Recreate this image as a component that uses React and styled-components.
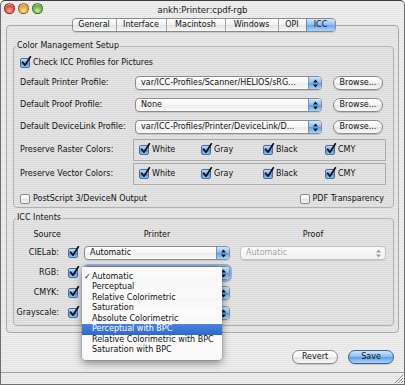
import React from 'react';
import styled, { createGlobalStyle, css } from 'styled-components';

const Global = createGlobalStyle`
  html, body { margin: 0; padding: 0; background: #fff; }
  body { font-family: "DejaVu Sans", Verdana, sans-serif; }
  * { box-sizing: border-box; }
`;

const pinstripe = css`
  background: repeating-linear-gradient(to bottom, #eeeeee 0px, #eeeeee 1px, #e5e5e5 1px, #e5e5e5 2px);
`;

const Window = styled.div`
  width: 405px;
  height: 385px;
  border: 1px solid #6e6e6e;
  border-top-color: #3a3a3a;
  border-radius: 5px 5px 0 0;
  ${pinstripe}
  display: flex;
  flex-direction: column;
  font-size: 8px;
  line-height: 10px;
  color: #111;
  overflow: hidden;
`;

const TitleBar = styled.div`
  height: 15px;
  display: grid;
  grid-template-columns: 1fr auto 1fr;
  align-items: center;
  padding: 0 3px;
`;

const Lights = styled.div`
  display: flex;
  gap: 3px;
`;

const lightColors = {
  red: ['#ffb1a6', '#e0463a', '#9c1b10'],
  yellow: ['#ffe7a0', '#e9a42a', '#a96a07'],
  green: ['#c9f0a6', '#6cb33d', '#2f7414'],
};

const Light = styled.span`
  width: 11px;
  height: 11px;
  border-radius: 50%;
  border: 1px solid rgba(0, 0, 0, 0.35);
  background: ${({ $c }) =>
    `radial-gradient(circle at 50% 75%, ${lightColors[$c][0]} 0%, ${lightColors[$c][1]} 55%, ${lightColors[$c][2]} 100%)`};
  box-shadow: inset 0 1px 1px rgba(255, 255, 255, 0.6);
`;

const Title = styled.div`
  font-size: 8.5px;
  color: #1a1a1a;
  padding-top: 2px;
`;

const TabRow = styled.div`
  display: flex;
  justify-content: center;
  margin-top: 2px;
  padding-left: 2px;
  position: relative;
  z-index: 1;
`;

const Tabs = styled.div`
  display: flex;
  height: 14px;
  border: 1px solid #8a8a8a;
  border-radius: 4px;
  overflow: hidden;
  box-shadow: 0 1px 1px rgba(0, 0, 0, 0.12);
`;

const Tab = styled.div`
  width: ${({ $w }) => $w}px;
  display: flex;
  align-items: center;
  justify-content: center;
  border-left: 1px solid #a4a4a4;
  background: linear-gradient(#ffffff, #f1f1f1 48%, #e3e3e3 52%, #f7f7f7);
  &:first-child { border-left: none; }
  ${({ $active }) =>
    $active &&
    css`
      background: linear-gradient(#cfe6fd, #8fc0f1 48%, #68a7ea 52%, #a9d5fb);
      border-left-color: #5a86bf;
    `}
`;

const Panel = styled.div`
  margin: -7px 5px 0 5px;
  height: 308px;
  border: 1px solid #a9a9a9;
  border-radius: 4px;
  background: rgba(0, 0, 0, 0.025);
  padding: 15px 4px 5px 6px;
  display: flex;
  flex-direction: column;
`;

const Group = styled.fieldset`
  margin: ${({ $mt }) => $mt || 0}px 0 0 0;
  padding: 5px 0 ${({ $pb }) => $pb || 1}px 0;
  border: 1px solid #b1b1b1;
  border-radius: 4px;
  background: rgba(0, 0, 0, 0.015);
  min-width: 0;
`;

const Legend = styled.legend`
  margin-left: 2px;
  padding: 0 1px;
  font-size: 8px;
  line-height: 10px;
  color: #151515;
`;

const Stack = styled.div`
  display: flex;
  flex-direction: column;
`;

const CheckRow = styled.div`
  margin-top: ${({ $mt }) => $mt || 0}px;
  height: 14px;
  display: flex;
  align-items: center;
  justify-content: space-between;
  padding: 0 9px 0 6px;
`;

const CheckItem = styled.label`
  display: flex;
  align-items: center;
  gap: 3px;
  white-space: nowrap;
`;

const Box = styled.span`
  width: 10px;
  height: 10px;
  flex: none;
  position: relative;
  border-radius: 2px;
  border: 1px solid ${({ $on }) => ($on ? '#4a6a98' : '#8a8a8a')};
  background: ${({ $on }) =>
    $on
      ? 'linear-gradient(#c3e0fb, #6aa8ea 50%, #4f94e0 55%, #8cc4f5)'
      : 'linear-gradient(#ffffff, #f2f2f2 50%, #e2e2e2 55%, #f6f6f6)'};
  & svg {
    position: absolute;
    left: 0px;
    top: -3px;
    overflow: visible;
  }
`;

const Checkbox = ({ on }) => (
  <Box $on={on}>
    {on && (
      <svg width="11" height="11" viewBox="0 0 11 11">
        <path d="M1.6 6.2 L4 9.2 L9.4 0.8" fill="none" stroke="#111" strokeWidth="1.7" strokeLinecap="round" strokeLinejoin="round" />
      </svg>
    )}
  </Box>
);

const ProfileRow = styled.div`
  margin-top: ${({ $mt }) => $mt || 0}px;
  height: 16px;
  display: grid;
  grid-template-columns: 104px 187px 50px;
  column-gap: 11px;
  align-items: center;
  padding-left: 6px;
`;

const Label = styled.span`
  white-space: nowrap;
  text-align: ${({ $align }) => $align || 'left'};
  padding-right: ${({ $pr }) => $pr || 0}px;
`;

const PopupBox = styled.div`
  position: relative;
  width: ${({ $w }) => $w}px;
  height: 14px;
  display: flex;
  align-items: stretch;
  border: 1px solid ${({ $disabled }) => ($disabled ? '#c2c2c2' : '#8c8c8c')};
  border-radius: 4px;
  background: ${({ $disabled }) =>
    $disabled ? 'linear-gradient(#fbfbfb, #f1f1f1)' : 'linear-gradient(#ffffff, #f6f6f6 50%, #ececec 55%, #fafafa)'};
  color: ${({ $disabled }) => ($disabled ? '#a4a4a4' : '#111')};
  box-shadow: ${({ $focused }) => ($focused ? '0 0 0 2px rgba(110, 160, 225, 0.75)' : '0 1px 1px rgba(0,0,0,0.1)')};
`;

const PopupText = styled.span`
  flex: 1;
  min-width: 0;
  overflow: hidden;
  white-space: nowrap;
  padding-left: 5px;
  line-height: 12px;
`;

const PopupCap = styled.span`
  width: 13px;
  flex: none;
  display: flex;
  align-items: center;
  justify-content: center;
  border-radius: 0 3px 3px 0;
  ${({ $disabled }) =>
    $disabled
      ? css`background: transparent;`
      : css`
          border-left: 1px solid #6f8fbd;
          background: linear-gradient(#d2e8fd, #86bcf1 48%, #5f9fe6 52%, #a7d3fb);
        `}
`;

const Arrows = ({ color }) => (
  <svg width="5" height="9" viewBox="0 0 5 9">
    <path d="M0 3.6 L2.5 0.6 L5 3.6 Z" fill={color} />
    <path d="M0 5.4 L2.5 8.4 L5 5.4 Z" fill={color} />
  </svg>
);

const Popup = ({ children, w, disabled, focused, menu }) => (
  <PopupBox $w={w} $disabled={disabled} $focused={focused}>
    <PopupText>{children}</PopupText>
    <PopupCap $disabled={disabled}>
      <Arrows color={disabled ? '#9a9a9a' : '#111'} />
    </PopupCap>
    {menu}
  </PopupBox>
);

const PushButton = styled.div`
  width: ${({ $w }) => $w}px;
  height: 14px;
  border-radius: 7px;
  display: flex;
  align-items: center;
  justify-content: center;
  border: 1px solid ${({ $primary }) => ($primary ? '#3f5f93' : '#8a8a8a')};
  background: ${({ $primary }) =>
    $primary
      ? 'linear-gradient(#d0e7fd, #89bdf1 48%, #5c9de6 52%, #aad6fc)'
      : 'linear-gradient(#ffffff, #f4f4f4 48%, #e4e4e4 52%, #f8f8f8)'};
  box-shadow: 0 1px 1px rgba(0, 0, 0, 0.15);
  white-space: nowrap;
`;

const ColorsRow = styled.div`
  margin-top: ${({ $mt }) => $mt || 0}px;
  height: 22px;
  display: grid;
  grid-template-columns: 113px 253px;
  align-items: center;
  padding-left: 6px;
`;

const ColorsBox = styled.div`
  height: 22px;
  border: 1px solid #ababab;
  display: grid;
  grid-template-columns: repeat(4, 62px);
  align-items: center;
  padding-left: 5px;
`;

const IntentGrid = styled.div`
  display: grid;
  grid-template-columns: 48px 22px 156px 146px;
  grid-template-rows: 13px 16px 16px 16px 16px;
  row-gap: 4px;
  align-items: center;
`;

const Header = styled.span`
  text-align: ${({ $align }) => $align || 'center'};
  padding-right: ${({ $pr }) => $pr || 0}px;
  width: ${({ $w }) => ($w ? `${$w}px` : 'auto')};
`;

const CheckCell = styled.div`
  display: flex;
  padding-left: 6px;
`;

const Menu = styled.div`
  position: absolute;
  left: -3px;
  top: 0px;
  width: 140px;
  padding: 4.5px 0;
  background: rgba(250, 250, 250, 0.97);
  border-radius: 0 0 4px 4px;
  box-shadow: 0 3px 9px rgba(0, 0, 0, 0.45), 0 0 0 1px rgba(0, 0, 0, 0.08);
  z-index: 5;
`;

const MenuItem = styled.div`
  height: 10.5px;
  line-height: 10.5px;
  display: flex;
  align-items: center;
  white-space: nowrap;
  color: ${({ $hi }) => ($hi ? '#fff' : '#111')};
  background: ${({ $hi }) => ($hi ? 'linear-gradient(#4a82dc, #2f69cf)' : 'transparent')};
`;

const Mark = styled.span`
  width: 10px;
  flex: none;
  padding-left: 2px;
  font-size: 8px;
`;

const ButtonRow = styled.div`
  margin-top: 17px;
  display: flex;
  justify-content: flex-end;
  gap: 10px;
  padding-right: 10px;
`;

const StatusBar = styled.div`
  margin-top: auto;
  height: 12px;
  border-top: 1px solid #9c9c9c;
  display: flex;
  justify-content: flex-end;
  align-items: flex-end;
`;

const tabs = [
  { label: 'General', w: 43 },
  { label: 'Interface', w: 50 },
  { label: 'Macintosh', w: 59 },
  { label: 'Windows', w: 53 },
  { label: 'OPI', w: 28 },
  { label: 'ICC', w: 29, active: true },
];

const menuItems = [
  'Automatic',
  'Perceptual',
  'Relative Colorimetric',
  'Saturation',
  'Absolute Colorimetric',
  'Perceptual with BPC',
  'Relative Colorimetric with BPC',
  'Saturation with BPC',
];

const colors = ['White', 'Gray', 'Black', 'CMY'];

const IntentMenu = () => (
  <Menu>
    {menuItems.map((m, i) => (
      <MenuItem key={m} $hi={i === 5}>
        <Mark>{i === 0 ? '✓' : ''}</Mark>
        {m}
      </MenuItem>
    ))}
  </Menu>
);

const Grip = () => (
  <svg width="11" height="11" viewBox="0 0 11 11">
    <path d="M10 2 L2 10 M10 5 L5 10 M10 8 L8 10" stroke="#8a8a8a" strokeWidth="1" />
    <path d="M10.8 2.8 L2.8 10.8 M10.8 5.8 L5.8 10.8" stroke="#fff" strokeWidth="0.8" />
  </svg>
);

const intents = [
  { label: 'CIELab:', proof: true },
  { label: 'RGB:', focused: true, covered: true },
  { label: 'CMYK:', covered: true },
  { label: 'Grayscale:', covered: true },
];

export default function App() {
  return (
    <>
      <Global />
      <Window>
        <TitleBar>
          <Lights>
            <Light $c="red" />
            <Light $c="yellow" />
            <Light $c="green" />
          </Lights>
          <Title>ankh:Printer:cpdf-rgb</Title>
          <span />
        </TitleBar>

        <TabRow>
          <Tabs>
            {tabs.map((t) => (
              <Tab key={t.label} $w={t.w} $active={t.active}>
                {t.label}
              </Tab>
            ))}
          </Tabs>
        </TabRow>

        <Panel>
          <Group>
            <Legend>Color Management Setup</Legend>
            <Stack>
              <CheckRow>
                <CheckItem>
                  <Checkbox on />
                  Check ICC Profiles for Pictures
                </CheckItem>
              </CheckRow>
              <ProfileRow $mt={5}>
                <Label>Default Printer Profile:</Label>
                <Popup w={187}>var/ICC-Profiles/Scanner/HELIOS/sRG...</Popup>
                <PushButton $w={50}>Browse...</PushButton>
              </ProfileRow>
              <ProfileRow $mt={6}>
                <Label>Default Proof Profile:</Label>
                <Popup w={187}>None</Popup>
                <PushButton $w={50}>Browse...</PushButton>
              </ProfileRow>
              <ProfileRow $mt={6}>
                <Label>Default DeviceLink Profile:</Label>
                <Popup w={187}>var/ICC-Profiles/Printer/DeviceLink/D...</Popup>
                <PushButton $w={50}>Browse...</PushButton>
              </ProfileRow>
              <ColorsRow $mt={4}>
                <Label>Preserve Raster Colors:</Label>
                <ColorsBox>
                  {colors.map((c) => (
                    <CheckItem key={c}>
                      <Checkbox on />
                      {c}
                    </CheckItem>
                  ))}
                </ColorsBox>
              </ColorsRow>
              <ColorsRow $mt={2}>
                <Label>Preserve Vector Colors:</Label>
                <ColorsBox>
                  {colors.map((c) => (
                    <CheckItem key={c}>
                      <Checkbox on />
                      {c}
                    </CheckItem>
                  ))}
                </ColorsBox>
              </ColorsRow>
              <CheckRow $mt={7}>
                <CheckItem>
                  <Checkbox />
                  PostScript 3/DeviceN Output
                </CheckItem>
                <CheckItem>
                  <Checkbox />
                  PDF Transparency
                </CheckItem>
              </CheckRow>
            </Stack>
          </Group>

          <Group $mt={5} $pb={4}>
            <Legend>ICC Intents</Legend>
            <IntentGrid>
              <Header $align="right" $pr={1}>Source</Header>
              <span />
              <Header $w={146}>Printer</Header>
              <Header>Proof</Header>
              {intents.map((it) => (
                <React.Fragment key={it.label}>
                  <Label $align="right" $pr={3}>{it.label}</Label>
                  <CheckCell>
                    <Checkbox on />
                  </CheckCell>
                  <Popup w={146} focused={it.focused} menu={it.focused ? <IntentMenu /> : null}>
                    {it.covered ? '' : 'Automatic'}
                  </Popup>
                  {it.proof ? (
                    <Popup w={146} disabled>
                      Automatic
                    </Popup>
                  ) : (
                    <span />
                  )}
                </React.Fragment>
              ))}
            </IntentGrid>
          </Group>
        </Panel>

        <ButtonRow>
          <PushButton $w={46}>Revert</PushButton>
          <PushButton $w={46} $primary>
            Save
          </PushButton>
        </ButtonRow>

        <StatusBar>
          <Grip />
        </StatusBar>
      </Window>
    </>
  );
}
